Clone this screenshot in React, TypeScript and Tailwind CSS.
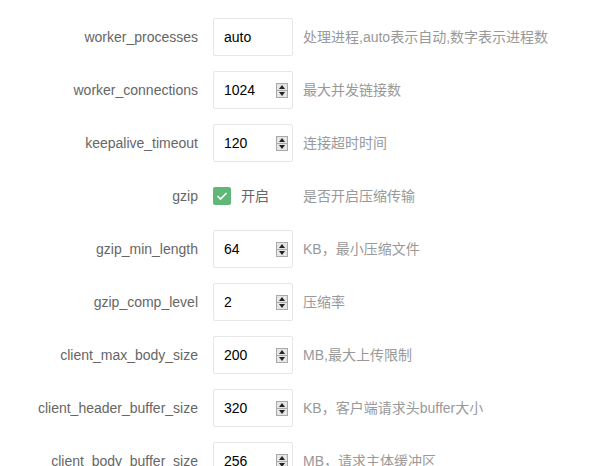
import React from "react";

type Row = { label: string; value?: string; spin?: boolean; check?: boolean; desc: string };

const rows: Row[] = [
  { label: "worker_processes", value: "auto", desc: "处理进程,auto表示自动,数字表示进程数" },
  { label: "worker_connections", value: "1024", spin: true, desc: "最大并发链接数" },
  { label: "keepalive_timeout", value: "120", spin: true, desc: "连接超时时间" },
  { label: "gzip", check: true, desc: "是否开启压缩传输" },
  { label: "gzip_min_length", value: "64", spin: true, desc: "KB，最小压缩文件" },
  { label: "gzip_comp_level", value: "2", spin: true, desc: "压缩率" },
  { label: "client_max_body_size", value: "200", spin: true, desc: "MB,最大上传限制" },
  { label: "client_header_buffer_size", value: "320", spin: true, desc: "KB，客户端请求头buffer大小" },
  { label: "client_body_buffer_size", value: "256", spin: true, desc: "MB，请求主体缓冲区" },
];

function Spinner() {
  return (
    <div className="flex h-[15px] w-[12px] flex-col border border-[#a9a9a9] bg-[#e6e6e6]">
      <div className="flex flex-1 items-center justify-center border-b border-[#a9a9a9]">
        <svg width="6" height="4" viewBox="0 0 6 4"><polygon points="3,0 6,4 0,4" fill="#222" /></svg>
      </div>
      <div className="flex flex-1 items-center justify-center">
        <svg width="6" height="4" viewBox="0 0 6 4"><polygon points="0,0 6,0 3,4" fill="#222" /></svg>
      </div>
    </div>
  );
}

export default function App() {
  return (
    <div
      className="h-[466px] w-[589px] overflow-hidden bg-white pt-[18px] text-[14px]"
      style={{ fontFamily: '"Liberation Sans", Arial, "Noto Sans CJK SC", sans-serif' }}
    >
      <div className="flex flex-col gap-[15px]">
        {rows.map((r) => (
          <div key={r.label} className="flex h-[38px] items-center">
            <div className="w-[198px] shrink-0 pr-0 text-right text-[#666]">{r.label}</div>
            <div className="ml-[15px] w-[80px] shrink-0">
              {r.check ? (
                <div className="flex items-center">
                  <div className="flex h-[18px] w-[18px] items-center justify-center rounded-[2px] bg-[#5fb878]">
                    <svg width="12" height="10" viewBox="0 0 12 10">
                      <polyline points="1.5,5 4.5,8 10.5,2" fill="none" stroke="#fff" strokeWidth="1.6" />
                    </svg>
                  </div>
                  <span className="ml-[10px] text-[#666]">开启</span>
                </div>
              ) : (
                <div className="flex h-[38px] items-center rounded-[2px] border border-[#e6e6e6] pl-[10px] pr-[4px]">
                  <span className="flex-1 text-black">{r.value}</span>
                  {r.spin && <Spinner />}
                </div>
              )}
            </div>
            <div className="ml-[10px] whitespace-nowrap text-[#999]">{r.desc}</div>
          </div>
        ))}
      </div>
    </div>
  );
}
